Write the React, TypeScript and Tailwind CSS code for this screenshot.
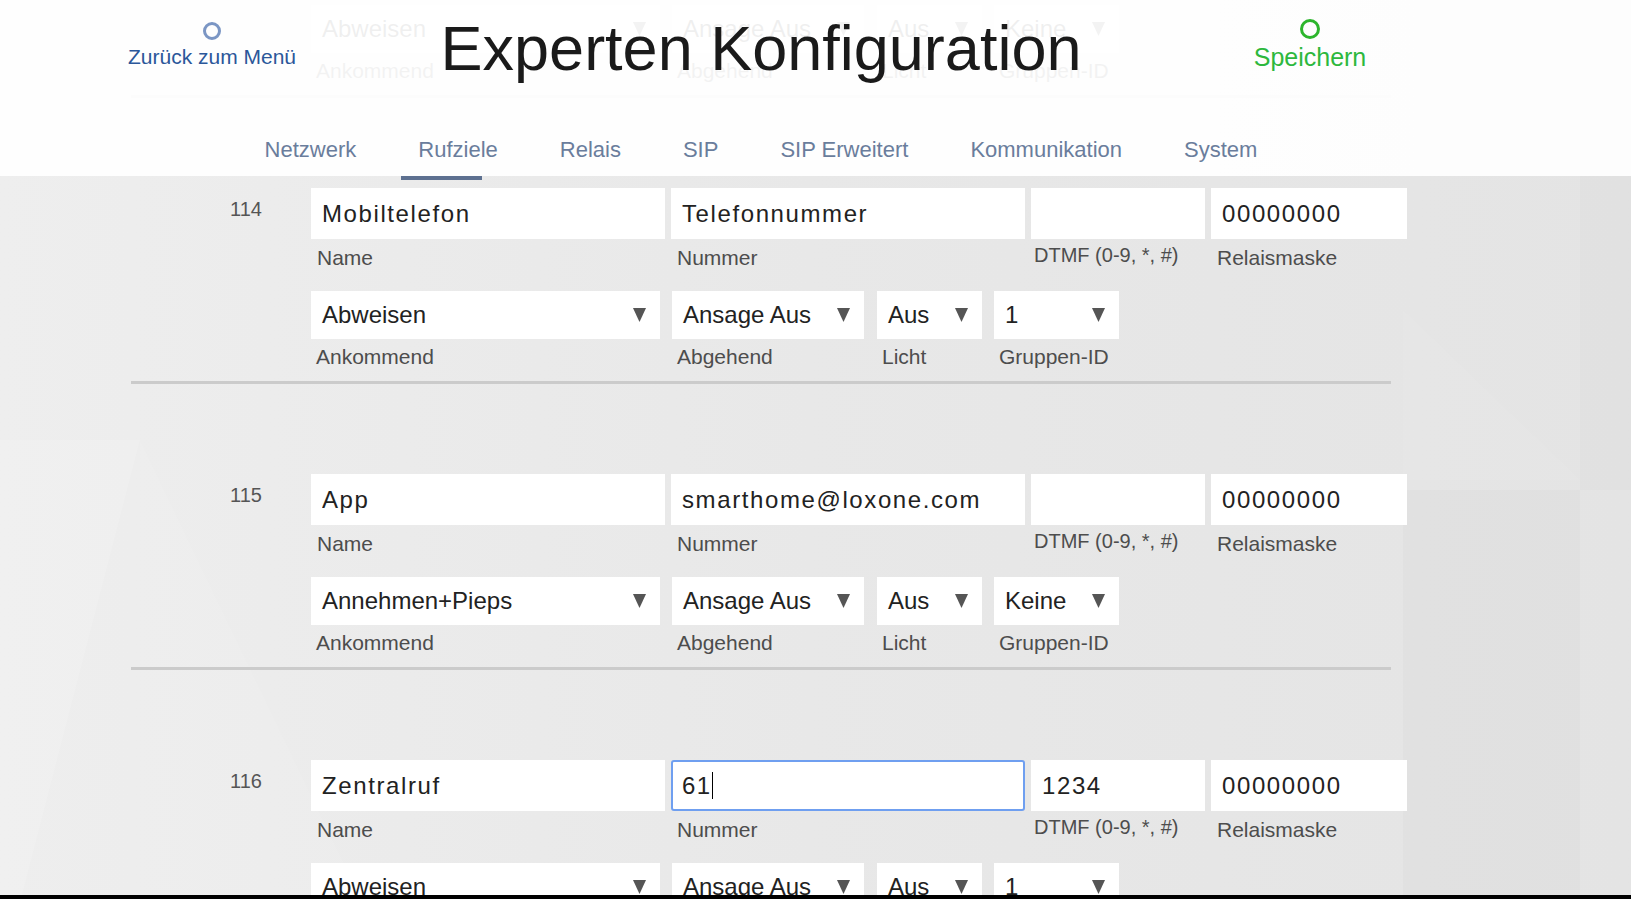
import React from "react";

type Zeile = {
  nr: number;
  name: string;
  nummer: string;
  dtmf: string;
  relais: string;
  ankommend: string;
  abgehend: string;
  licht: string;
  gruppe: string;
  fokus?: boolean;
};

const zeilen: Zeile[] = [
  { nr: 113, name: "Festnetz", nummer: "Telefonnummer", dtmf: "", relais: "00000000", ankommend: "Abweisen", abgehend: "Ansage Aus", licht: "Aus", gruppe: "Keine" },
  { nr: 114, name: "Mobiltelefon", nummer: "Telefonnummer", dtmf: "", relais: "00000000", ankommend: "Abweisen", abgehend: "Ansage Aus", licht: "Aus", gruppe: "1" },
  { nr: 115, name: "App", nummer: "smarthome@loxone.com", dtmf: "", relais: "00000000", ankommend: "Annehmen+Pieps", abgehend: "Ansage Aus", licht: "Aus", gruppe: "Keine" },
  { nr: 116, name: "Zentralruf", nummer: "61", dtmf: "1234", relais: "00000000", ankommend: "Abweisen", abgehend: "Ansage Aus", licht: "Aus", gruppe: "1", fokus: true },
];

const tabs = ["Netzwerk", "Rufziele", "Relais", "SIP", "SIP Erweitert", "Kommunikation", "System"];

const font = "font-['Liberation_Sans',Arial,sans-serif]";

function Feld({ wert, label, breite, fokus, dtmf }: { wert: string; label: string; breite: string; fokus?: boolean; dtmf?: boolean }) {
  return (
    <div className={`flex flex-col ${breite}`}>
      {fokus ? (
        <div className="h-[51px] bg-white border-2 border-[#6f9ff0] rounded-[3px] pl-[9px] flex items-center text-[24px] tracking-[1.5px] text-[#222]">
          <span>{wert}</span>
          <span className="w-[1px] h-[27px] bg-black" />
        </div>
      ) : (
        <input
          defaultValue={wert}
          readOnly
          className={`h-[51px] w-full bg-white pl-[11px] text-[24px] tracking-[1.6px] text-[#222] outline-none ${font}`}
        />
      )}
      <div className={`h-[52px] whitespace-nowrap text-[#4d4d4d] ${dtmf ? "pl-[3px] pt-[3px] text-[20px]" : "pl-[6px] pt-[6px] text-[21px]"} leading-[26px]`}>
        {label}
      </div>
    </div>
  );
}

function Auswahl({ wert, label, breite }: { wert: string; label: string; breite: string }) {
  return (
    <div className={`flex flex-col ${breite}`}>
      <div className="h-[48px] bg-white pl-[11px] pr-[14px] flex items-center justify-between text-[24px] text-[#222]">
        <span>{wert}</span>
        <svg width="13" height="14" viewBox="0 0 13 14">
          <polygon points="0,0 13,0 6.5,14" fill="#555" />
        </svg>
      </div>
      <div className="h-[42px] pl-[5px] pt-[5px] text-[21px] leading-[26px] text-[#4d4d4d]">{label}</div>
    </div>
  );
}

function Eintrag({ z }: { z: Zeile }) {
  return (
    <div>
      <div className="flex">
        <div className="w-[180px] shrink-0 pl-[99px] pt-[10px] text-[20px] leading-[22px] text-[#555]">{z.nr}</div>
        <div className="flex flex-col">
          <div className="flex gap-[6px]">
            <Feld wert={z.name} label="Name" breite="w-[354px]" />
            <Feld wert={z.nummer} label="Nummer" breite="w-[354px]" fokus={z.fokus} />
            <Feld wert={z.dtmf} label="DTMF (0-9, *, #)" breite="w-[174px]" dtmf />
            <Feld wert={z.relais} label="Relaismaske" breite="w-[196px]" />
          </div>
          <div className="flex">
            <Auswahl wert={z.ankommend} label="Ankommend" breite="w-[349px] mr-[12px]" />
            <Auswahl wert={z.abgehend} label="Abgehend" breite="w-[192px] mr-[13px]" />
            <Auswahl wert={z.licht} label="Licht" breite="w-[105px] mr-[12px]" />
            <Auswahl wert={z.gruppe} label="Gruppen-ID" breite="w-[125px]" />
          </div>
        </div>
      </div>
      <div className="h-[3px] bg-[#cbcbcb]" />
      <div className="h-[90px]" />
    </div>
  );
}

export default function App() {
  return (
    <div className={`relative h-[899px] w-full overflow-hidden bg-gradient-to-r from-[#eeeeee] via-[#e8e8e8] to-[#e4e4e4] ${font}`}>
      {/* hintergrund */}
      <svg className="absolute inset-0 h-full w-full" viewBox="0 0 1631 899" preserveAspectRatio="none">
        <polygon points="0,440 140,440 0,980" fill="#ffffff" opacity="0.12" />
        <polygon points="140,440 400,980 140,980" fill="#ffffff" opacity="0.06" />
        <polygon points="1403,310 1580,480 1403,480" fill="#ffffff" opacity="0.06" />
        <polygon points="1580,170 1631,170 1631,490 1580,490" fill="#000000" opacity="0.01" />
        <polygon points="1403,490 1580,490 1580,899 1403,899" fill="#000000" opacity="0.015" />
      </svg>

      {/* inhalt */}
      <div className="relative ml-[131px] w-[1260px] mt-[-98px]">
        {zeilen.map((z) => (
          <Eintrag key={z.nr} z={z} />
        ))}
      </div>

      {/* kopf */}
      <header className="absolute top-0 left-0 right-0 h-[176px] bg-white/[0.93]">
        <div className="ml-[131px] w-[1260px] flex flex-col">
          <div className="flex h-[110px]">
            <div className="w-[162px] flex flex-col items-center pt-[22px]">
              <div className="w-[18px] h-[18px] rounded-full border-[3px] border-[#7b96c4]" />
              <span className="mt-[5px] whitespace-nowrap text-[21px] leading-[24px] text-[#2b579a]">Zurück zum Menü</span>
            </div>
            <h1 className="flex-1 text-center whitespace-nowrap pt-[17px] text-[63px] leading-[63px] text-[#1a1a1a]">Experten Konfiguration</h1>
            <div className="w-[162px] flex flex-col items-center pt-[19px]">
              <div className="w-[20px] h-[20px] rounded-full border-[3px] border-[#2cb52c]" />
              <span className="mt-[5px] whitespace-nowrap text-[25px] leading-[26px] text-[#2db83d]">Speichern</span>
            </div>
          </div>
          <nav className="flex justify-center h-[66px]">
            {tabs.map((t) => (
              <div key={t} className="relative px-[31px] pt-[27px] whitespace-nowrap text-[22px] leading-[26px] text-[#6a7d9c]">
                {t}
                {t === "Rufziele" && <div className="absolute left-[14px] top-[66px] w-[81px] h-[4px] bg-[#5d7090]" />}
              </div>
            ))}
          </nav>
        </div>
      </header>

      <div className="absolute bottom-0 left-0 right-0 h-[4px] bg-black" />
    </div>
  );
}
